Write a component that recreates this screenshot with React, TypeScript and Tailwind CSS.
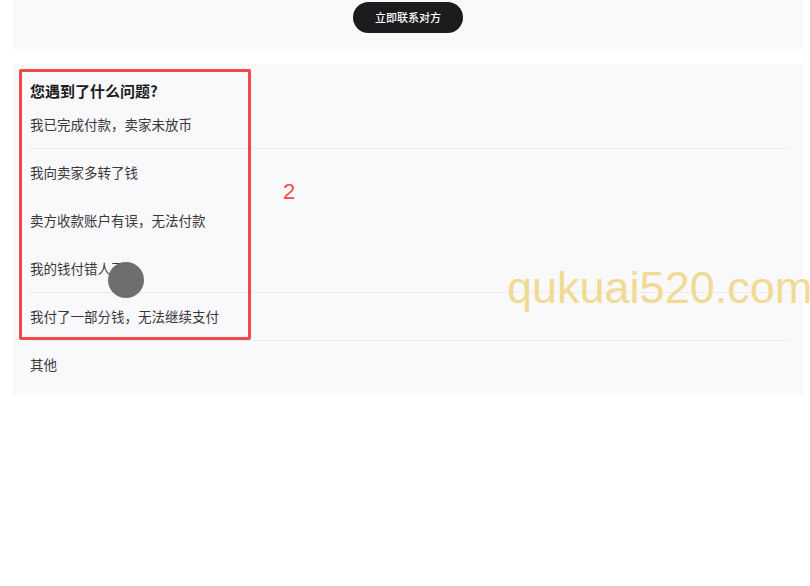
import React from 'react';

const font = { fontFamily: '"Noto Sans CJK SC", "Noto Sans", sans-serif' };

const options = [
  { label: '我已完成付款，卖家未放币', divider: true },
  { label: '我向卖家多转了钱', divider: false },
  { label: '卖方收款账户有误，无法付款', divider: false },
  { label: '我的钱付错人了', divider: true },
  { label: '我付了一部分钱，无法继续支付', divider: true },
  { label: '其他', divider: false },
];

export default function App() {
  return (
    <div className="relative w-full min-h-[586px] bg-white pl-[13px] pr-[7px]" style={font}>
      {/* Contact bar */}
      <div className="flex h-[49px] justify-center bg-[#f9f8fb] pt-[2px]">
        <button
          type="button"
          className="h-[31px] w-[110px] rounded-full bg-[#1c1c1f] text-[11px] font-medium text-white"
        >
          立即联系对方
        </button>
      </div>

      {/* Problem list */}
      <div className="mt-[15px] bg-[#f9f8fb] pb-[6px] pt-[17px]">
        <h2 className="px-[17px] text-[15px] font-bold leading-[19px] text-[#1b1b1d]">
          您遇到了什么问题?
        </h2>
        <ul className="mt-[1px]">
          {options.map((o) => (
            <li key={o.label} className="ml-[17px] mr-[13px] flex h-[48px] flex-col">
              <div className="flex flex-1 items-center text-[13.5px] text-[#38383b]">{o.label}</div>
              <div className={o.divider ? 'h-px bg-[#ebebee]' : 'h-px'} />
            </li>
          ))}
        </ul>
      </div>

      {/* Annotation overlay */}
      <div className="pointer-events-none absolute left-[19px] top-[69px] h-[271px] w-[232px] rounded-[2px] border-[3px] border-[#f24a4a]" />
      <span
        className="pointer-events-none absolute left-[283px] top-[175px] text-[22px] font-light text-[#f24a4a]"
        style={{ fontFamily: '"Liberation Sans", sans-serif' }}
      >
        2
      </span>

      {/* Touch indicator */}
      <div className="pointer-events-none absolute left-[108px] top-[262px] h-[36px] w-[36px] rounded-full bg-[#6e6e6f]" />

      {/* Watermark */}
      <span
        className="pointer-events-none absolute left-[507px] top-[265px] text-[45px] leading-none text-[#efdb94]"
        style={{ fontFamily: '"Liberation Sans", Arial, sans-serif' }}
      >
        qukuai520.com
      </span>
    </div>
  );
}
